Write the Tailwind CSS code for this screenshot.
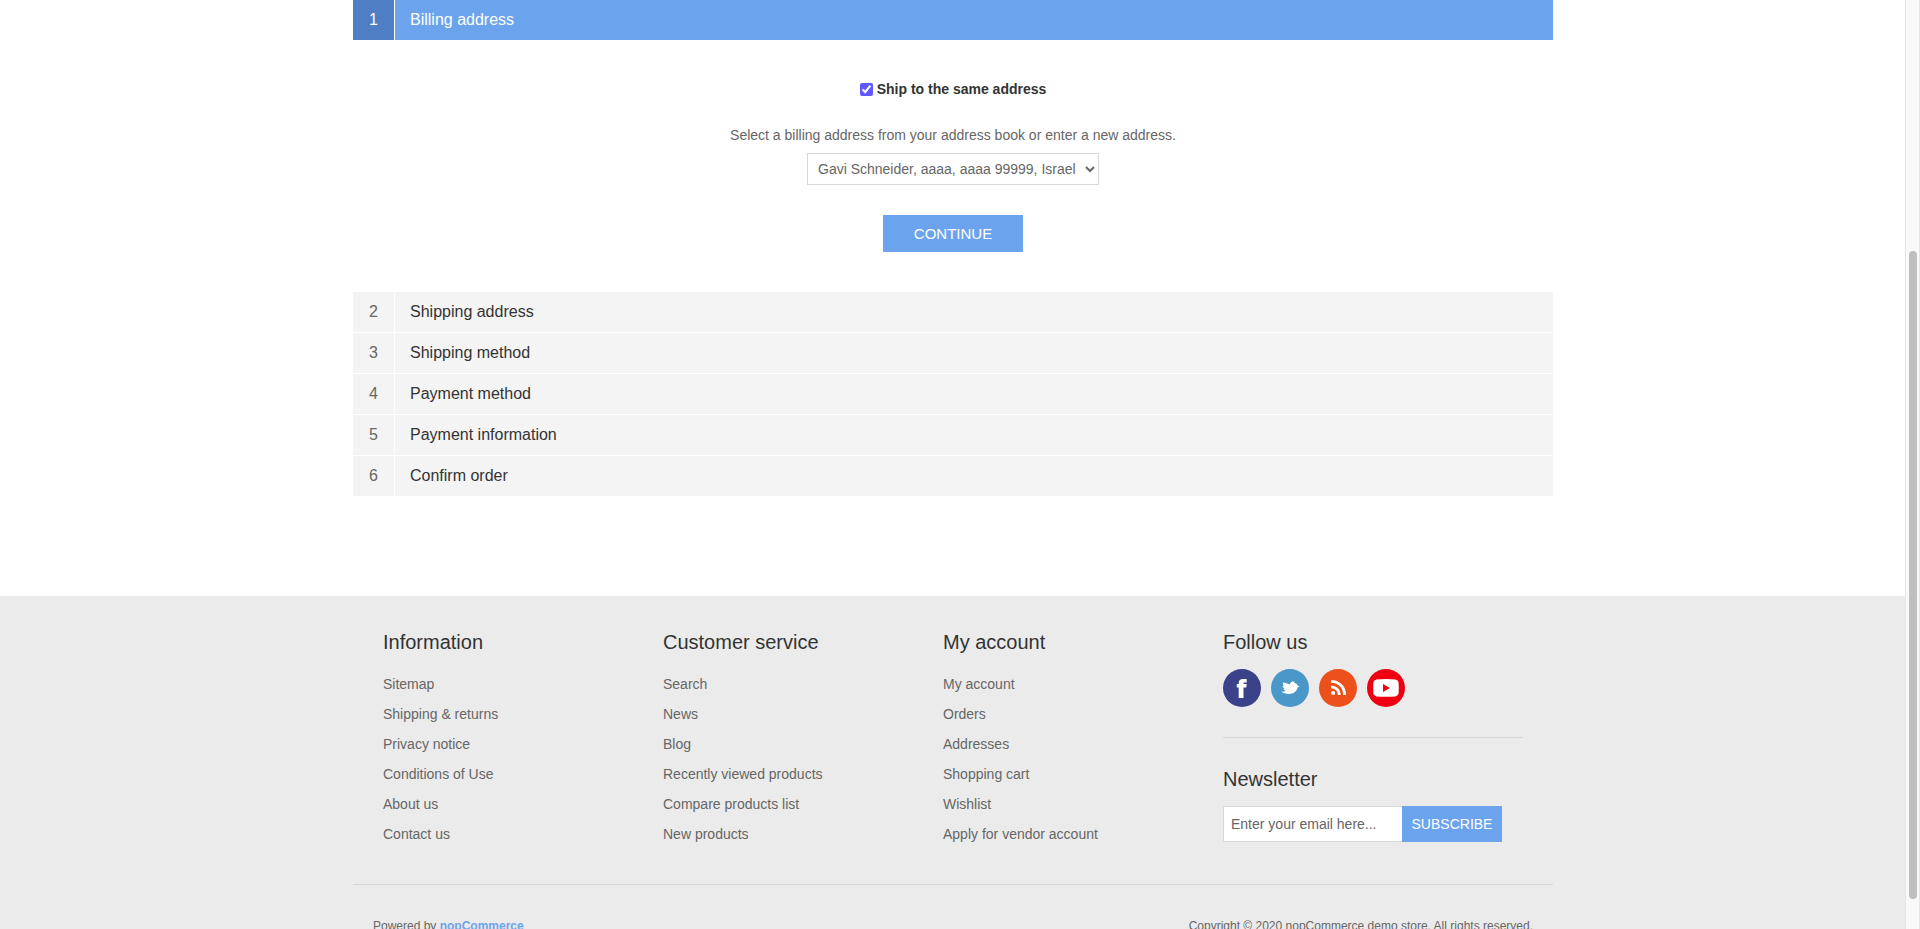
<!DOCTYPE html>
<html lang="en">
<head>
<meta charset="utf-8">
<meta name="viewport" content="width=device-width, initial-scale=1">
<title>nopCommerce demo store. Checkout</title>
<script src="https://cdn.jsdelivr.net/npm/@tailwindcss/browser@4"></script>
</head>
<body class="h-screen overflow-hidden bg-white pr-[14px] font-['Liberation_Sans',Arial,sans-serif] text-sm text-[#666]">
<main class="mx-auto max-w-[1200px] pb-[100px]">
  <ol class="flex flex-col gap-px text-base leading-10">
    <li>
      <div class="flex gap-px text-white">
        <span class="w-[41px] bg-[#4f7ec4] text-center">1</span>
        <h2 class="flex-1 bg-[#6ba4ec] pl-[15px]">Billing address</h2>
      </div>
      <form class="flex flex-col items-center pt-[39px] pb-[39px] text-sm leading-5">
        <div class="flex items-center gap-1">
          <input id="same" type="checkbox" checked class="size-[13px] accent-[#6158ff]">
          <label for="same" class="font-bold text-[#333]">Ship to the same address</label>
        </div>
        <label for="address" class="mt-[26px]">Select a billing address from your address book or enter a new address.</label>
        <select id="address" class="mt-2 h-8 w-[292px] border border-[#d8d8d8] bg-white px-1.5">
          <option>Gavi Schneider, aaaa, aaaa 99999, Israel</option>
          <option>New Address</option>
        </select>
        <button type="button" class="mt-[30px] h-[37px] w-[140px] bg-[#6ba4ec] text-[15px] text-white">CONTINUE</button>
      </form>
    </li>
    <li class="flex gap-px"><span class="w-[41px] bg-[#f4f4f4] text-center">2</span><h2 class="flex-1 bg-[#f4f4f4] pl-[15px] text-[#333]">Shipping address</h2></li>
    <li class="flex gap-px"><span class="w-[41px] bg-[#f4f4f4] text-center">3</span><h2 class="flex-1 bg-[#f4f4f4] pl-[15px] text-[#333]">Shipping method</h2></li>
    <li class="flex gap-px"><span class="w-[41px] bg-[#f4f4f4] text-center">4</span><h2 class="flex-1 bg-[#f4f4f4] pl-[15px] text-[#333]">Payment method</h2></li>
    <li class="flex gap-px"><span class="w-[41px] bg-[#f4f4f4] text-center">5</span><h2 class="flex-1 bg-[#f4f4f4] pl-[15px] text-[#333]">Payment information</h2></li>
    <li class="flex gap-px"><span class="w-[41px] bg-[#f4f4f4] text-center">6</span><h2 class="flex-1 bg-[#f4f4f4] pl-[15px] text-[#333]">Confirm order</h2></li>
  </ol>
</main>
<footer class="-mr-[14px] bg-[#ebebeb] pr-[14px]">
  <div class="mx-auto max-w-[1200px]">
    <div class="grid grid-cols-[1fr_1fr_1fr_300px] px-[30px] pt-[34px] pb-[35px]">
      <nav>
        <h3 class="mb-[15px] text-xl leading-6 text-[#333]">Information</h3>
        <ul class="leading-[30px]">
          <li><a href="#">Sitemap</a></li>
          <li><a href="#">Shipping &amp; returns</a></li>
          <li><a href="#">Privacy notice</a></li>
          <li><a href="#">Conditions of Use</a></li>
          <li><a href="#">About us</a></li>
          <li><a href="#">Contact us</a></li>
        </ul>
      </nav>
      <nav>
        <h3 class="mb-[15px] text-xl leading-6 text-[#333]">Customer service</h3>
        <ul class="leading-[30px]">
          <li><a href="#">Search</a></li>
          <li><a href="#">News</a></li>
          <li><a href="#">Blog</a></li>
          <li><a href="#">Recently viewed products</a></li>
          <li><a href="#">Compare products list</a></li>
          <li><a href="#">New products</a></li>
        </ul>
      </nav>
      <nav>
        <h3 class="mb-[15px] text-xl leading-6 text-[#333]">My account</h3>
        <ul class="leading-[30px]">
          <li><a href="#">My account</a></li>
          <li><a href="#">Orders</a></li>
          <li><a href="#">Addresses</a></li>
          <li><a href="#">Shopping cart</a></li>
          <li><a href="#">Wishlist</a></li>
          <li><a href="#">Apply for vendor account</a></li>
        </ul>
      </nav>
      <div>
        <h3 class="mb-[15px] text-xl leading-6 text-[#333]">Follow us</h3>
        <div class="flex gap-2.5 border-b border-[#d6d6d6] pb-[30px]">
          <a href="#" aria-label="Facebook"><svg class="size-[38px]" viewBox="0 0 38 38"><circle cx="19" cy="19" r="19" fill="#3a4289"/><path fill="#fff" d="M15.7 29V18.6H13.8V15H15.7V14.2C15.7 11.3 17.2 10 20 10H23.7V13.4H21.9C20.8 13.4 20.5 13.8 20.5 14.5V15H23.7L23.3 18.6H20.5V29Z"/></svg></a>
          <a href="#" aria-label="Twitter"><svg class="size-[38px]" viewBox="0 0 38 38"><circle cx="19" cy="19" r="19" fill="#4a97c9"/><path fill="#fff" d="M12 13.4C14.4 13.6 16.8 14.3 18.6 15.6C19.2 14 20.6 12.6 22.6 11.8L22.1 13L23.8 12.6L23 13.9C24.8 13.9 26.3 15 26.6 16.5L28.7 17.6L26.7 18.3C25.8 22.3 22.4 25 18 25C14.8 25 12 24.2 10 22.6C12.2 22.9 14 22.6 15.2 21.6C13.8 21.5 12.8 20.9 12.3 20L13.8 19.7C12.4 19.2 11.6 18.3 11.4 17.1L13.4 17.4C12.1 16.3 11.6 15 12 13.4Z"/></svg></a>
          <a href="#" aria-label="RSS"><svg class="size-[38px]" viewBox="0 0 38 38"><circle cx="19" cy="19" r="19" fill="#ee501c"/><circle cx="14.1" cy="24" r="2.1" fill="#fff"/><path fill="none" stroke="#fff" stroke-width="2.8" d="M12 17.8C17 17.8 20.4 21.4 20.4 26M12 12.4C20 12.4 25.6 18.2 25.6 26"/></svg></a>
          <a href="#" aria-label="YouTube"><svg class="size-[38px]" viewBox="0 0 38 38"><circle cx="19" cy="19" r="19" fill="#ee0012"/><path fill="#fff" d="M9.5 10.5Q19 9.7 28.5 10.5Q31.2 10.8 31.6 13.5Q32 19 31.6 24.2Q31.2 27 28.5 27.4Q19 28.2 9.5 27.4Q6.8 27 6.4 24.2Q6 19 6.4 13.5Q6.8 10.8 9.5 10.5Z"/><path fill="#ee0012" d="M16 15L23 19L16 23Z"/></svg></a>
        </div>
        <h3 class="mt-[29px] mb-[15px] text-xl leading-6 text-[#333]"><label for="email">Newsletter</label></h3>
        <form class="flex h-9">
          <input id="email" type="email" placeholder="Enter your email here..." class="w-[179px] border border-r-0 border-[#d8d8d8] bg-white px-[7px] placeholder:text-[#666]">
          <button type="button" class="w-[100px] bg-[#6ba4ec] text-white">SUBSCRIBE</button>
        </form>
      </div>
    </div>
    <div class="flex justify-between border-t border-[#d6d6d6] px-5 pt-[33px] pb-8 text-xs">
      <p>Powered by <a href="#" class="font-bold text-[#6ba4ec]">nopCommerce</a></p>
      <p>Copyright © 2020 nopCommerce demo store. All rights reserved.</p>
    </div>
  </div>
</footer>
<div class="fixed inset-y-0 right-0 w-[15px] border-x border-[#e6e6e6] bg-[#f9f9f9] px-[3px] pt-[251px]" aria-hidden="true">
  <div class="h-[648px] w-2 rounded-full bg-[#bfbfbf]"></div>
</div>
</body>
</html>
